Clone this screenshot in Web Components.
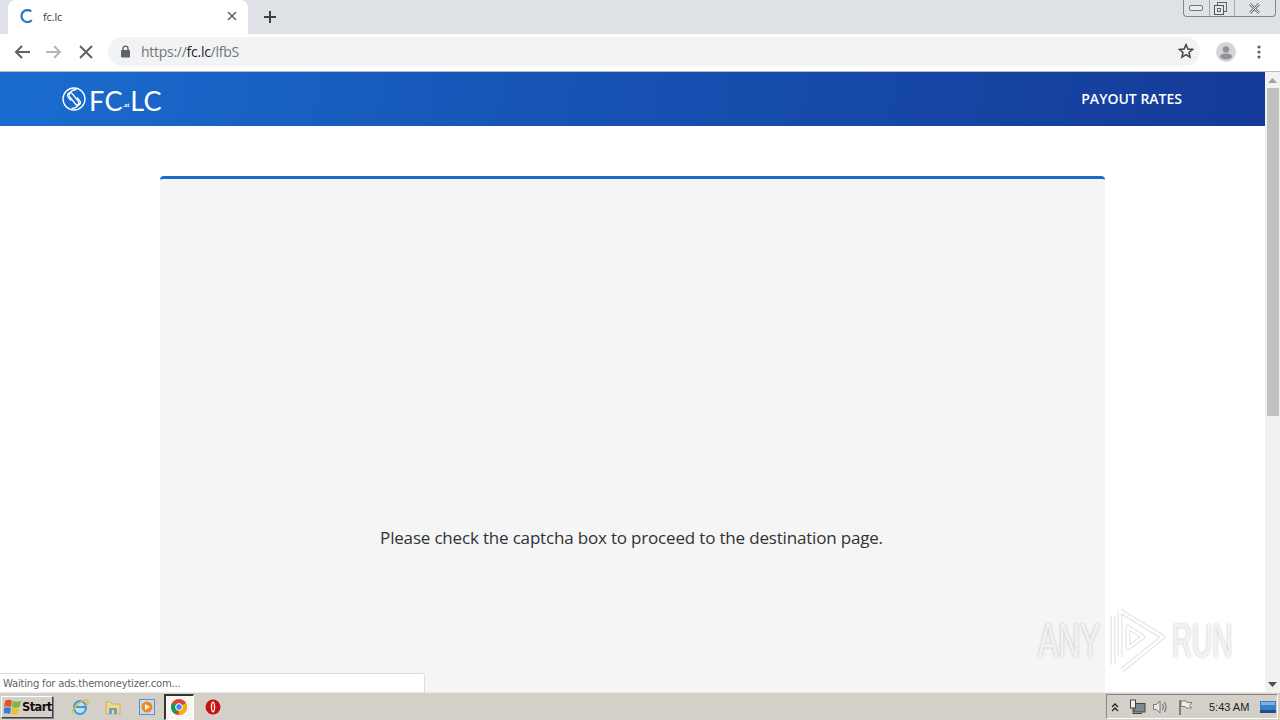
<!DOCTYPE html>
<html><head><meta charset="utf-8"><title>fc.lc</title>
<style>
html,body{margin:0;height:100%;overflow:hidden;background:#fff}
body{display:flex;flex-direction:column;width:1280px;height:720px;position:relative;font-family:"Open Sans",sans-serif}
</style></head><body>
<chrome-tabstrip></chrome-tabstrip>
<chrome-toolbar></chrome-toolbar>
<page-view>
  <site-header></site-header>
  <captcha-card>Please check the captcha box to proceed to the destination page.</captcha-card>
</page-view>
<status-bubble>Waiting for ads.themoneytizer.com...</status-bubble>
<anyrun-mark></anyrun-mark>
<win-taskbar></win-taskbar>
<script>
function def(name,html){customElements.define(name,class extends HTMLElement{constructor(){super();this.attachShadow({mode:'open'}).innerHTML=html}})}
def('chrome-tabstrip',`<style>
:host{display:flex;height:34px;flex:none;background:#dee1e6;position:relative;box-sizing:border-box;padding-left:8px}
.tab{width:240px;height:34px;background:#fff;border-radius:8px 8px 0 0;display:flex;align-items:center;box-sizing:border-box;padding:0 11px 2px 12px;font:11px "Open Sans",sans-serif;color:#3c4043}
.spin{width:14px;height:14px;margin-right:9px;flex:none}
.t{flex:1;letter-spacing:-.15px}
.plus{margin:0 0 0 11px;width:22px;height:34px;display:flex;align-items:center;justify-content:center}
.win{position:absolute;right:4px;top:0;height:17px;width:93px;display:grid;grid-template-columns:25px 25px 1fr;box-sizing:border-box;border:1px solid #83868c;border-top:0;border-radius:0 0 4px 4px;background:#dfe2e7}
.win span{display:flex;align-items:center;justify-content:center;border-left:1px solid #a4a7ac}
.win span:first-child{border-left:0;padding-right:2px}
</style>
<div class="tab"><svg class="spin" viewBox="0 0 14 14"><path d="M11.300 2.400A6 6 0 1 0 11.800 11.200" fill="none" stroke="#2b74c4" stroke-width="2.200"/></svg><span class="t">fc.lc</span>
<svg width="10" height="10" viewBox="0 0 10 10"><path d="M1 1l8 8M9 1l-8 8" stroke="#5f6368" stroke-width="1.600"/></svg></div>
<div class="plus"><svg width="12" height="12" viewBox="0 0 12 12"><path d="M6 0v12M0 6h12" stroke="#3c4043" stroke-width="2"/></svg></div>
<div class="win"><span><svg width="14" height="7" viewBox="0 0 14 7"><rect x=".5" y=".5" width="13" height="5" rx="1.500" fill="#eceef1" stroke="#70737a"/></svg></span>
<span style="padding-right:4px"><svg width="13" height="13" viewBox="0 0 13 13"><rect x="3.500" y=".5" width="9" height="9" fill="none" stroke="#666"/><rect x=".5" y="3.500" width="9" height="9" fill="#e6e8ec" stroke="#555"/><rect x="3.500" y="6.500" width="3" height="3" fill="none" stroke="#666"/></svg></span>
<span style="padding-right:2px"><svg width="13" height="11" viewBox="0 0 13 11"><path d="M2 1l9 9M11 1l-9 9" stroke="#777" stroke-width="2.600"/><path d="M2 1l9 9M11 1l-9 9" stroke="#eceef1" stroke-width="1"/></svg></span></div>`);
def('chrome-toolbar',`<style>
:host{display:flex;align-items:center;height:38px;flex:none;background:#fff;border-bottom:1px solid #b9bcc2;box-sizing:border-box;padding:0 0 2px 6px}
.b{width:32px;height:32px;display:flex;align-items:center;justify-content:center;flex:none}
.omni{margin-left:6px;width:1092px;height:29px;border-radius:15px;background:#f1f3f4;display:flex;align-items:center;box-sizing:border-box;padding:0 6px 1px 12px;font:14px "Open Sans",sans-serif;color:#72767a;letter-spacing:-.27px}
.omni svg.l{margin-right:10px;flex:none}
.omni b{font-weight:400;color:#202124}
.u{flex:1}
.av{margin-left:9px;width:34px;display:flex;justify-content:center}
.dots{margin-left:1px;width:30px;display:flex;justify-content:center}
</style>
<div class="b"><svg width="16" height="14" viewBox="0 0 16 14"><path d="M8 1L2 7l6 6M2 7h14" fill="none" stroke="#5f6368" stroke-width="2"/></svg></div>
<div class="b"><svg width="16" height="14" viewBox="0 0 16 14"><path d="M8 1l6 6-6 6M14 7H0" fill="none" stroke="#b4b6b9" stroke-width="2"/></svg></div>
<div class="b"><svg width="14" height="14" viewBox="0 0 14 14"><path d="M1 1l12 12M13 1L1 13" stroke="#5f6368" stroke-width="2"/></svg></div>
<div class="omni"><svg class="l" width="11" height="13" viewBox="0 0 11 13"><rect x="1" y="5" width="9" height="7.500" rx="1" fill="#5f6368"/><path d="M3 5.500V3.600a2.500 2.500 0 0 1 5 0v1.900" fill="none" stroke="#5f6368" stroke-width="1.400"/></svg>
<span class="u">https://<b>fc.lc</b>/lfbS</span>
<svg width="16" height="16" viewBox="0 0 16 16"><path d="M8 1.600l1.900 4.400 4.700.4-3.600 3.100 1.100 4.700L8 11.700l-4.100 2.500 1.100-4.700-3.600-3.100 4.700-.4z" fill="none" stroke="#444" stroke-width="1.500"/></svg></div>
<div class="av"><svg width="20" height="20" viewBox="0 0 20 20"><circle cx="10" cy="10" r="10" fill="#d3d5d8"/><circle cx="10" cy="7.500" r="3.200" fill="#909396"/><ellipse cx="10" cy="14.400" rx="6" ry="3" fill="#909396"/></svg></div>
<div class="dots"><svg width="4" height="14" viewBox="0 0 4 14"><circle cx="2" cy="2" r="1.600" fill="#5f6368"/><circle cx="2" cy="7" r="1.600" fill="#5f6368"/><circle cx="2" cy="12" r="1.600" fill="#5f6368"/></svg></div>`);
def('page-view',`<style>
:host{display:grid;grid-template-columns:1fr 15px;height:620px;flex:none;overflow:hidden}
.main{min-width:0;display:flex;flex-direction:column;overflow:hidden}
.bar{background:#f1f1f1;display:flex;flex-direction:column;align-items:center}
.a{height:16px;display:flex;align-items:center;justify-content:center;flex:none}
.thumb{width:12px;height:328px;background:#c1c1c1;flex:none}
.sp{flex:1}
</style>
<div class="main"><slot></slot></div>
<div class="bar"><div class="a"><svg width="9" height="5" viewBox="0 0 9 5"><path d="M4.500 0L9 5H0z" fill="#a3a3a3"/></svg></div><div class="thumb"></div><div class="sp"></div><div class="a"><svg width="9" height="5" viewBox="0 0 9 5"><path d="M0 0h9L4.500 5z" fill="#505050"/></svg></div></div>`);
def('site-header',`<style>
:host{display:flex;align-items:center;justify-content:space-between;height:54px;flex:none;background:linear-gradient(100deg,#1a6dcf 0%,#1653b4 45%,#153a98 100%);padding:0 83px 0 62px;color:#fff}
.logo{display:flex;align-items:center;font:400 27px/1 "Lato","Open Sans",sans-serif;letter-spacing:.3px;padding-top:3px}
.logo svg{margin-right:3px;margin-top:-3px}
.logo i{font:700 5px/1 "Open Sans",sans-serif;margin:10px 1px 0 0;letter-spacing:0}
a{font:600 14px "Open Sans",sans-serif;color:#fff;text-decoration:none;margin-bottom:2px}
</style>
<div class="logo"><svg width="24" height="24" viewBox="0 0 24 24" fill="none" stroke="#fff" stroke-width="1.300"><circle cx="12" cy="12" r="11"/><path d="M14.500 2.500C9.500 2.800 5.500 6.500 7.800 10l5.700 7c2.200 2.900 6.300-.2 4.300-3.200L15 10.500"/><path d="M9.500 21.500c5-.3 9-4 6.700-7.500l-5.700-7C8.300 4.100 4.200 7.200 6.200 10.200L9 13.500"/></svg>FC<i>.at</i>LC</div>
<a>PAYOUT RATES</a>`);
def('captcha-card',`<style>
:host{display:flex;flex:none;margin:50px 0 0 160px;width:945px;height:520px;box-sizing:border-box;background:#f5f5f5;border-top:3px solid #1c6bcb;border-radius:4px 4px 0 0;justify-content:center;padding-top:347px;padding-right:2px;font:400 17px/24px "Open Sans",sans-serif;color:#2f3336;letter-spacing:-.18px}
</style><div><slot></slot></div>`);
def('status-bubble',`<style>
:host{position:absolute;left:0;top:673px;width:425px;height:19px;box-sizing:border-box;background:#fff;border:1px solid #dcdcdc;border-left:0;border-bottom:0;border-radius:0 3px 0 0;padding:2px 0 0 3px;font:10px/16px "DejaVu Sans",sans-serif;color:#5f6368;letter-spacing:-.2px;white-space:nowrap;overflow:hidden}
</style><slot></slot>`);
def('anyrun-mark',`<style>
:host{position:absolute;left:1038px;top:609px;width:195px;height:64px;display:block;font:400 48px/64px "Liberation Sans",sans-serif;color:rgba(255,255,255,.8);text-shadow:0 0 3px rgba(165,165,165,.8);pointer-events:none;white-space:nowrap}
span{position:absolute;top:0;transform-origin:left}
.a{left:0;transform:scaleX(.63)}
.r{left:134px;transform:scaleX(.58)}
svg{position:absolute;left:67px;top:0}
</style>
<span class="a">ANY</span><svg width="64" height="64" viewBox="0 0 64 64" fill="none" stroke-linejoin="round"><g stroke="#dcdcdc" stroke-width="5" opacity=".7"><path d="M15 2l43 26-41 33M23 18l15 10-15 11zM15 2v46M8 7v49"/></g><g stroke="#fff" stroke-width="2.500"><path d="M15 2l43 26-41 33M23 18l15 10-15 11zM15 2v46M8 7v49"/></g></svg><span class="r">RUN</span>`);
def('win-taskbar',`<style>
:host{display:flex;align-items:center;height:28px;flex:none;background:#d4d0c8;border-top:1px solid #efece6;box-sizing:border-box;position:relative;font:11px "Liberation Sans",sans-serif;color:#222}
.start{margin:0 0 0 1px;width:52px;height:22px;box-sizing:border-box;border:1px solid #fff;border-right-color:#404040;border-bottom-color:#404040;box-shadow:1px 1px 0 #808080;display:flex;align-items:center;gap:1px;padding-left:2px;font:700 11.500px "DejaVu Sans",sans-serif;letter-spacing:-.6px;color:#111}
.q{display:flex;align-items:center;margin-left:10px}
.i{width:33.500px;height:24px;display:flex;align-items:center;justify-content:center;box-sizing:border-box;flex:none}
.on{width:30px;height:26px;margin:0 2px 0 0;padding-right:1px;background:#f7f6f3;border:1px solid #fff;border-top-color:#333;border-left-color:#333;border-top-width:2px;border-left-width:2px}
.tray{margin-left:auto;margin-right:2px;width:172px;height:25px;box-sizing:border-box;border:1px solid #888;border-right-color:#fff;border-bottom-color:#fff;display:flex;align-items:center;padding-left:4px}
.clock{margin-left:16.500px;width:51px;flex:none;font:11px "Liberation Sans",sans-serif;color:#222}
</style>
<div class="start"><svg width="17" height="16" viewBox="0 0 17 16"><path d="M1 2q3-2 7-.5L7 8Q3 6.500 0 8z" fill="#e2532a"/><path d="M9 2q3 1.500 8 0l-1.500 6q-4 1.500-7.500 0z" fill="#78b83c"/><path d="M0 9q3-1.500 7 0l-1 6q-4-1.500-7 0z" fill="#3b7bd6"/><path d="M8 9q3 1.500 7.500 0l-1.500 6q-4 1.500-7 0z" fill="#f0c030"/></svg>Start</div>
<div class="q">
<div class="i"><svg width="18" height="18" viewBox="0 0 18 18"><ellipse cx="9" cy="9.500" rx="6" ry="6.500" fill="#bfe4f5" stroke="#3a9ad9" stroke-width="2"/><path d="M4 9h10" stroke="#3a9ad9" stroke-width="2"/><path d="M1 15C3 8 10 2 16 2c2 1 1 4-1 6" fill="none" stroke="#e4b84a" stroke-width="1.500"/></svg></div>
<div class="i"><svg width="16" height="16" viewBox="0 0 16 16"><path d="M1 3h5l1 2h8v10H1z" fill="#f1d98a" stroke="#c7a85a" stroke-width=".8"/><rect x="4" y="9" width="8" height="6" fill="#6ba4c6"/><rect x="7" y="11" width="2" height="4" fill="#f1d98a"/></svg></div>
<div class="i"><svg width="16" height="16" viewBox="0 0 16 16"><rect x=".5" y=".5" width="15" height="15" fill="#c7dcf2" stroke="#5d8fc9"/><circle cx="8" cy="8" r="5.500" fill="#f08a1c"/><path d="M6 5l5 3-5 3z" fill="#fff"/></svg></div>
<div class="i on"><svg width="16" height="16" viewBox="0 0 16 16"><circle cx="8" cy="8" r="8" fill="#db4437"/><path d="M8 8l6.900-4A8 8 0 0 1 8 16z" fill="#f4b400"/><path d="M8 8L4 14.900A8 8 0 0 1 1.100 4z" fill="#0f9d58"/><circle cx="8" cy="8" r="3.400" fill="#4285f4" stroke="#fff"/></svg></div>
<div class="i" style="margin-left:1px"><svg width="16" height="16" viewBox="0 0 16 16"><circle cx="8" cy="8" r="7.500" fill="#c81010"/><ellipse cx="8" cy="8" rx="2.200" ry="5.500" fill="#fff"/><ellipse cx="8" cy="8" rx=".9" ry="4" fill="#c81010"/></svg></div>
</div>
<div class="tray">
<svg width="8" height="10" viewBox="0 0 8 10"><path d="M1 5l3-3 3 3M1 9l3-3 3 3" fill="none" stroke="#222" stroke-width="1.300"/></svg>
<svg style="margin-left:9.500px" width="17" height="16" viewBox="0 0 17 16"><rect x="5" y="4.500" width="11" height="8.500" fill="#7f888e" stroke="#444"/><rect x="1.500" y="1" width="5" height="8" fill="#f0f0f0" stroke="#444"/><path d="M4 9v5.500h9" fill="none" stroke="#444"/></svg>
<svg style="margin-left:6.500px" width="16" height="16" viewBox="0 0 16 16"><path d="M1.500 5.500h3l3.500-3.500v12L4.500 10.500h-3z" fill="#e8e8e8" stroke="#777"/><path d="M10.500 5q1.500 3 0 6M12.500 3q3 5 0 10" fill="none" stroke="#777" stroke-width="1.200"/></svg>
<svg style="margin-left:9.500px" width="15" height="16" viewBox="0 0 15 16"><path d="M2 1v15" stroke="#555" stroke-width="1.300"/><path d="M3 2h5l1 1.500h5l-2.500 3 2 2.500H8L7 7.500H3z" fill="#f0f0f0" stroke="#666" stroke-width=".8"/></svg>
<span class="clock">5:43 AM</span>
<svg width="16" height="12" viewBox="0 0 16 12"><rect width="16" height="12" fill="#3a7dc8"/><rect y="9" width="16" height="3" fill="#1e4f8a"/><rect x="1" y="1" width="14" height="3" fill="#7eb1e4"/></svg>
</div>`);
</script>
</body></html>
